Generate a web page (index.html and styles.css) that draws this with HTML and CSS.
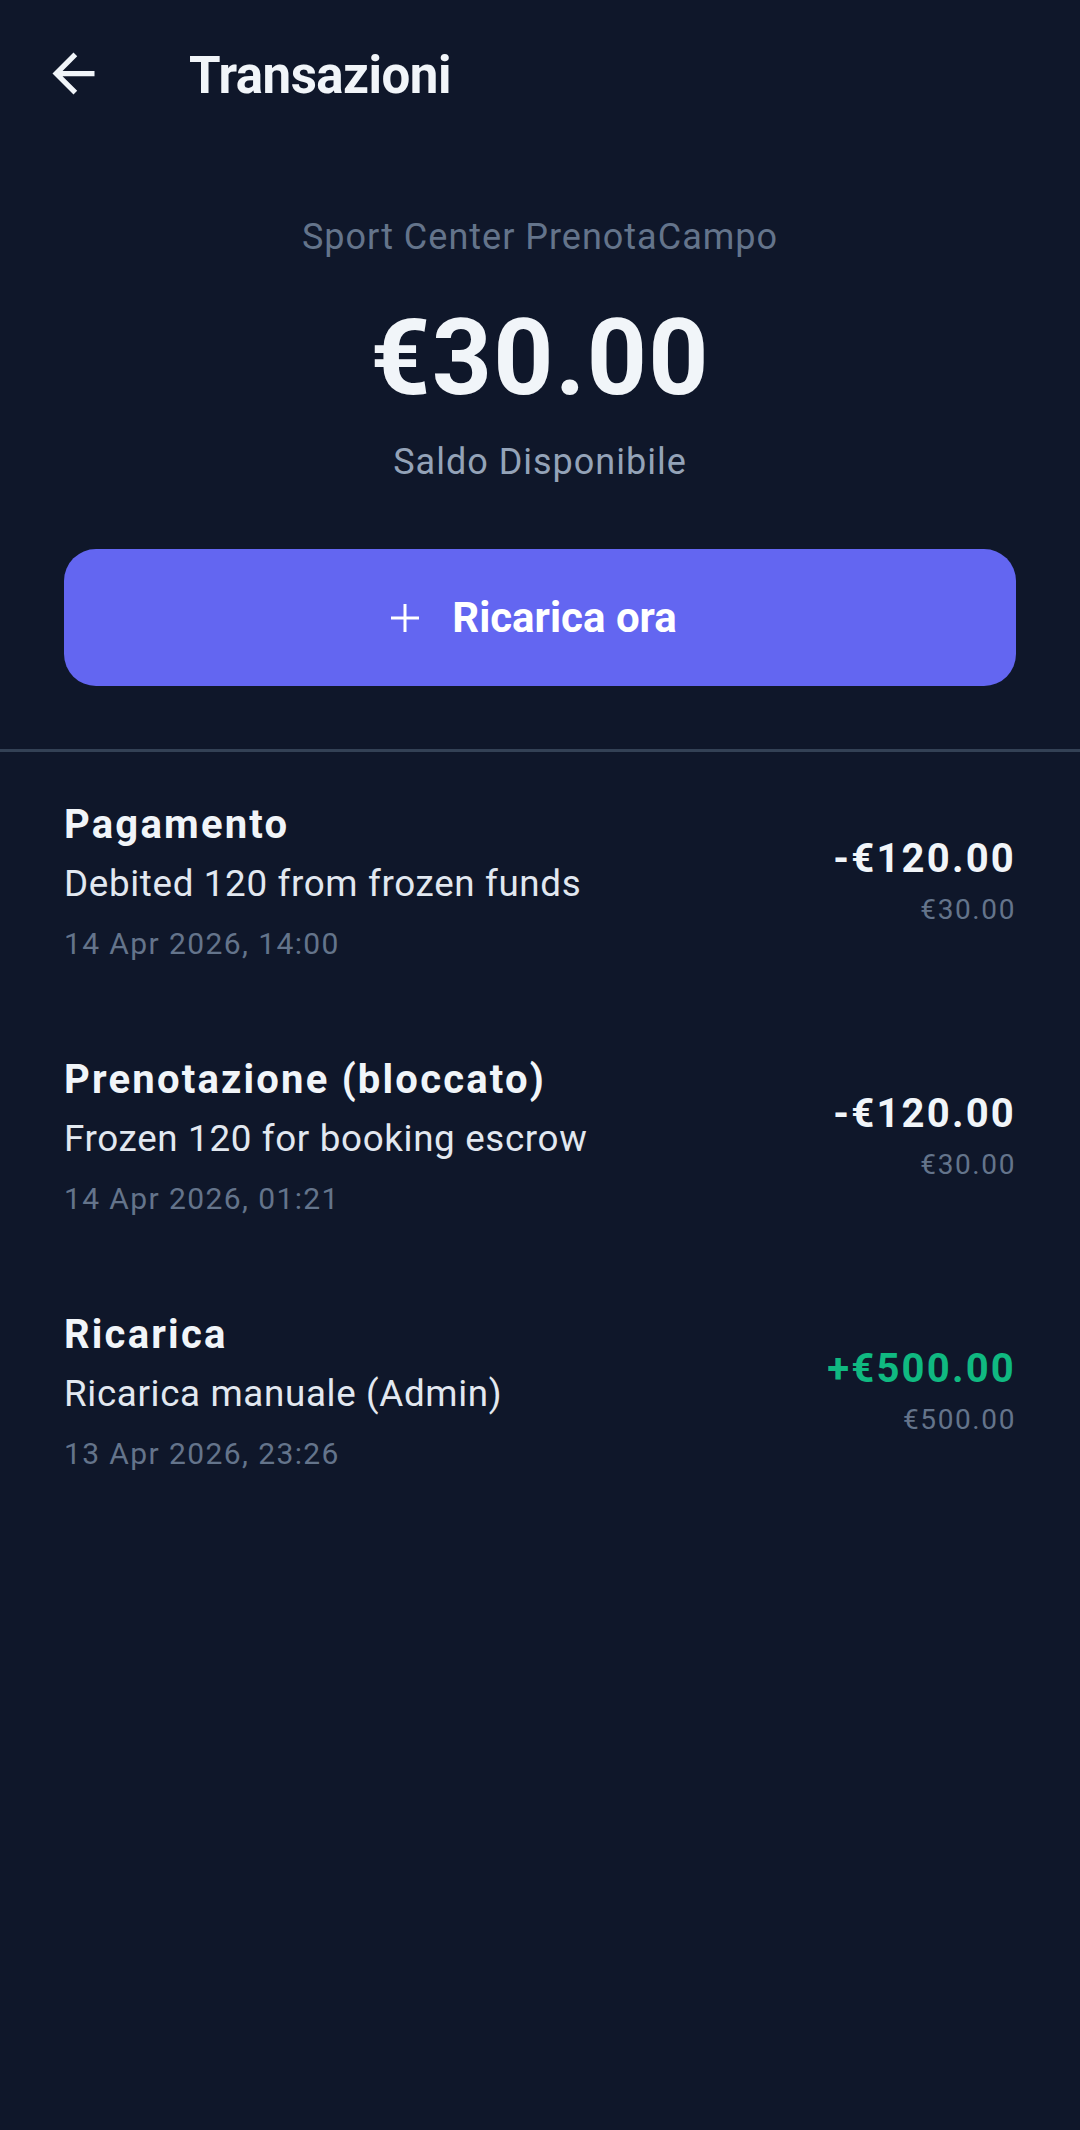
FILE: index.html
```html
<!DOCTYPE html>
<html lang="it">
<head>
  <meta charset="UTF-8" />
  <meta name="viewport" content="width=device-width, initial-scale=1.0" />
  <title>Transazioni</title>
  <link rel="stylesheet" href="styles.css">
</head>
<body>
  <header class="app-bar">
    <button class="back-btn" aria-label="Indietro">
      <svg viewBox="0 0 24 24" width="63" height="63">
        <path d="M20 11H7.83l5.59-5.59L12 4l-8 8 8 8 1.41-1.41L7.83 13H20v-2z" fill="currentColor"/>
      </svg>
    </button>
    <h1>Transazioni</h1>
  </header>

  <section class="wallet">
    <p class="wallet-club">Sport Center PrenotaCampo</p>
    <p class="wallet-balance">€30.00</p>
    <p class="wallet-label">Saldo Disponibile</p>
    <button class="topup-btn">
      <svg viewBox="0 0 28 28" width="28" height="28">
        <path d="M14 0v28M0 14h28" stroke="currentColor" stroke-width="3" fill="none"/>
      </svg>
      <span>Ricarica ora</span>
    </button>
  </section>

  <ul class="tx-list">
    <li class="tx">
      <div class="tx-info">
        <p class="tx-title">Pagamento</p>
        <p class="tx-desc">Debited 120 from frozen funds</p>
        <p class="tx-date">14 Apr 2026, 14:00</p>
      </div>
      <div class="tx-amounts">
        <p class="tx-amount">-€120.00</p>
        <p class="tx-after">€30.00</p>
      </div>
    </li>
    <li class="tx">
      <div class="tx-info">
        <p class="tx-title">Prenotazione (bloccato)</p>
        <p class="tx-desc">Frozen 120 for booking escrow</p>
        <p class="tx-date">14 Apr 2026, 01:21</p>
      </div>
      <div class="tx-amounts">
        <p class="tx-amount">-€120.00</p>
        <p class="tx-after">€30.00</p>
      </div>
    </li>
    <li class="tx">
      <div class="tx-info">
        <p class="tx-title">Ricarica</p>
        <p class="tx-desc">Ricarica manuale (Admin)</p>
        <p class="tx-date">13 Apr 2026, 23:26</p>
      </div>
      <div class="tx-amounts">
        <p class="tx-amount tx-credit">+€500.00</p>
        <p class="tx-after">€500.00</p>
      </div>
    </li>
  </ul>
</body>
</html>
```

FILE: styles.css
```css
:root {
  --bg: #0f172a;
  --text: #f1f5f9;
  --muted: #64748b;
  --soft: #94a3b8;
  --primary: #6366f1;
  --green: #10b981;
  --line: #334155;
}

* {
  box-sizing: border-box;
  margin: 0;
  padding: 0;
}

body {
  font-family: Roboto, 'Noto Sans', sans-serif;
  background-color: var(--bg);
  color: var(--text);
  width: 1080px;
  min-height: 2130px;
}

/* Top bar */
.app-bar {
  height: 147px;
  display: flex;
  align-items: center;
  padding-left: 42px;
}

.back-btn {
  background: none;
  border: none;
  color: var(--text);
  display: flex;
  width: 63px;
  height: 63px;
}

.app-bar h1 {
  margin-left: 84px;
  margin-top: 5px;
  font-size: 51px;
  font-weight: 700;
  letter-spacing: -0.5px;
  line-height: 1.2;
}

/* Wallet summary */
.wallet {
  display: flex;
  flex-direction: column;
  align-items: center;
  padding: 69px 64px 0;
}

.wallet-club {
  font-size: 36px;
  line-height: 43px;
  color: var(--muted);
  letter-spacing: 1px;
}

.wallet-balance {
  margin-top: 37px;
  font-size: 105px;
  line-height: 126px;
  font-weight: 700;
  letter-spacing: 1.3px;
}

.wallet-label {
  margin-top: 19px;
  font-size: 36px;
  line-height: 43px;
  color: var(--soft);
  letter-spacing: 1px;
}

.topup-btn {
  margin-top: 65px;
  width: 100%;
  height: 137px;
  border: none;
  border-radius: 32px;
  background-color: var(--primary);
  color: #fff;
  display: flex;
  align-items: center;
  justify-content: center;
  gap: 33px;
  padding-right: 12px;
  font-family: inherit;
  font-size: 42px;
  font-weight: 700;
}

/* Transactions */
.tx-list {
  list-style: none;
  margin-top: 63px;
  border-top: 3px solid var(--line);
}

.tx {
  display: flex;
  align-items: center;
  justify-content: space-between;
  padding: 0 64px;
  height: 255px;
}

.tx-info {
  padding-top: 4px;
}

.tx-title {
  font-size: 40px;
  line-height: 48px;
  font-weight: 700;
  letter-spacing: 2.2px;
}

.tx-desc {
  margin-top: 13px;
  font-size: 36.75px;
  line-height: 44px;
  letter-spacing: 0.66px;
  color: #e2e8f0;
}

.tx-date {
  margin-top: 20px;
  font-size: 30px;
  line-height: 36px;
  letter-spacing: 1.4px;
  color: var(--muted);
}

.tx-amounts {
  text-align: right;
  padding-top: 2px;
}

.tx-amount {
  font-size: 40px;
  line-height: 48px;
  font-weight: 700;
  letter-spacing: 2.2px;
}

.tx-credit {
  color: var(--green);
}

.tx-after {
  margin-top: 10px;
  font-size: 28px;
  line-height: 34px;
  letter-spacing: 1.6px;
  color: var(--muted);
}
```
